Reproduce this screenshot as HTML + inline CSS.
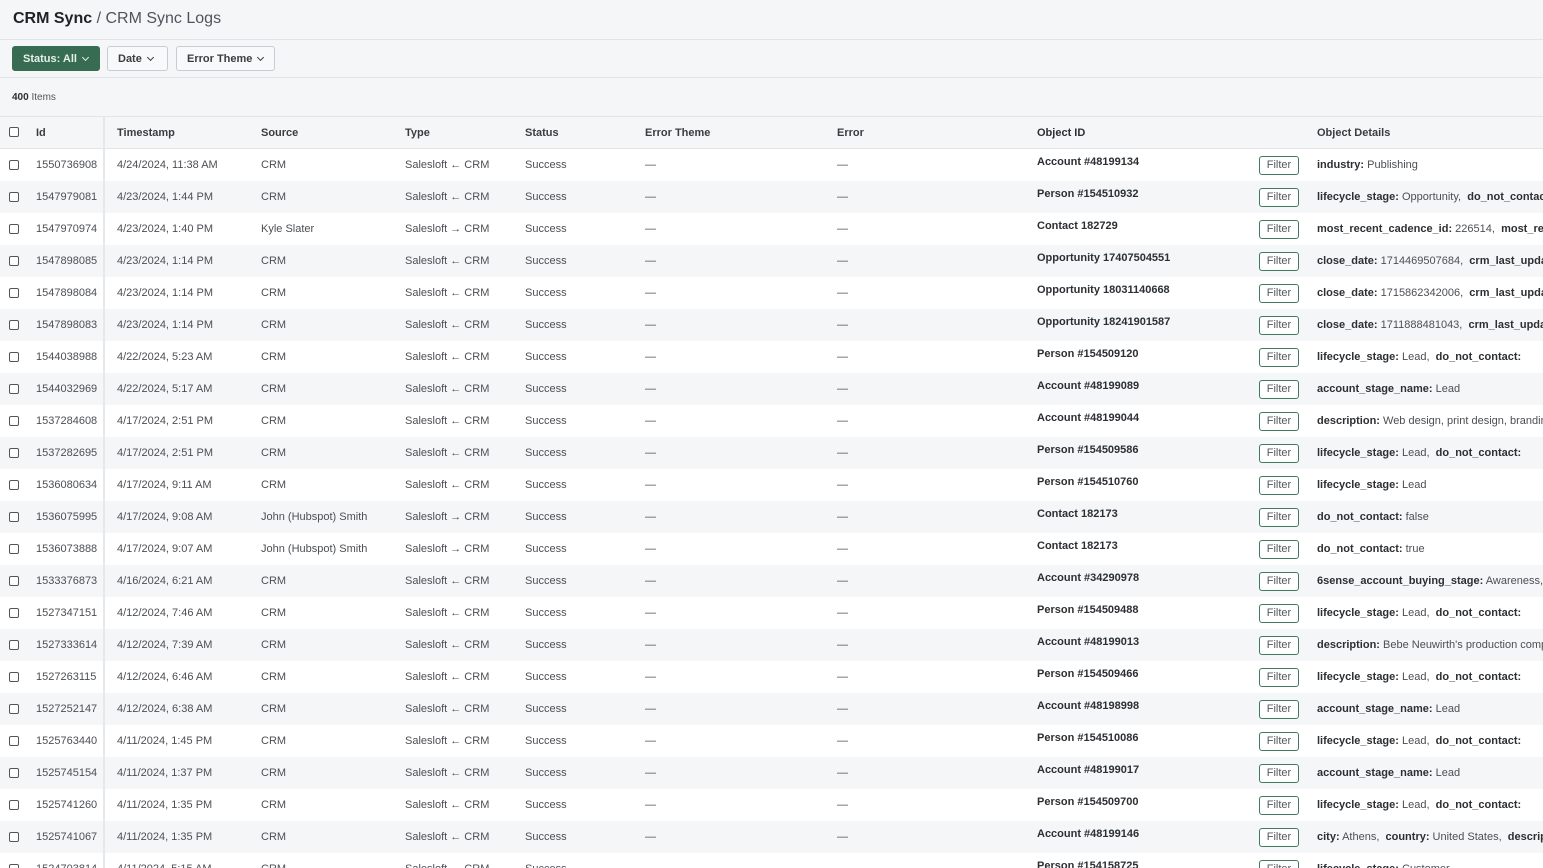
<!DOCTYPE html>
<html><head><meta charset="utf-8">
<style>
*{box-sizing:border-box;margin:0;padding:0}
html,body{width:1543px;height:868px;overflow:hidden;background:#f5f6f7;font-family:"Liberation Sans",sans-serif;color:#3a3d40}
.top{height:40px;border-bottom:1px solid #e2e4e6;padding:10px 13px;font-size:16px;color:#2c2f33}
.top b{font-weight:bold;color:#1f2225}
.top span{color:#50545a}
.bar{height:38px;border-bottom:1px solid #e2e4e6;position:relative}
.btn{position:absolute;top:6px;height:25px;border:1px solid #c9ccd0;border-radius:3px;background:#f8f9fa;font-size:11px;font-weight:bold;color:#3a3d40;padding:6px 10px;white-space:nowrap}
.btn.g{background:#376c52;border-color:#376c52;color:#e8f0ec}
.chev{display:inline-block;width:5px;height:5px;border-right:1px solid currentColor;border-bottom:1px solid currentColor;transform:rotate(45deg);margin-left:6px;position:relative;top:-2px}
.cnt{height:39px;border-bottom:1px solid #e2e4e6;font-size:10px;padding:14px 12px;color:#555}
.cnt b{color:#2c2f33}
.row{position:relative;height:32px;font-size:11px;white-space:nowrap;color:#4b4f54}
.row span{position:absolute;top:10px}
.hd{background:#f5f6f7;border-bottom:1px solid #e2e4e6;font-weight:bold;color:#3a3d40;height:32px}
.hd span{top:10px}
.w{background:#fff}.g2{background:#f5f6f7}
.cb{position:absolute;left:9px;top:11px;width:10px;height:10px;border:1px solid #555;border-radius:2px;background:#fff}
.hd .cb{top:10px}
.div{position:absolute;left:103px;top:0;bottom:0;width:2px;background:#e6e8ea}
.a{left:36px}.b{left:117px}.c{left:261px}.d{left:405px}.e{left:525px}.f{left:645px}.h{left:837px}
.row span.i{left:1037px;top:7px;font-weight:bold;color:#2c2f33}
.hd span.i{top:10px}
.j{left:1317px}
.j b{color:#2c2f33}
.fb{position:absolute;left:1259px;top:7px;width:40px;height:19px;border:1px solid #3f7a5e;border-radius:3px;font-size:11px;color:#55595e;text-align:center;line-height:17px;background:#fff}
</style></head><body>
<div class="top"><b>CRM Sync</b> <span>/ CRM Sync Logs</span></div>
<div class="bar">
<div class="btn g" style="left:12px;width:88px">Status: All<i class="chev"></i></div>
<div class="btn" style="left:107px;width:61px">Date<i class="chev"></i></div>
<div class="btn" style="left:176px;width:99px">Error Theme<i class="chev"></i></div>
</div>
<div class="cnt"><b>400</b> Items</div>
<div class="row hd"><i class="cb"></i><div class="div"></div><span class="a">Id</span><span class="b">Timestamp</span><span class="c">Source</span><span class="d">Type</span><span class="e">Status</span><span class="f">Error Theme</span><span class="h">Error</span><span class="i">Object ID</span><span class="j">Object Details</span></div>

<div class="row w"><i class="cb"></i><div class="div"></div><span class="a">1550736908</span><span class="b">4/24/2024, 11:38 AM</span><span class="c">CRM</span><span class="d">Salesloft ← CRM</span><span class="e">Success</span><span class="f">—</span><span class="h">—</span><span class="i">Account #48199134</span><div class="fb">Filter</div><span class="j"><b>industry:</b> Publishing</span></div>
<div class="row g2"><i class="cb"></i><div class="div"></div><span class="a">1547979081</span><span class="b">4/23/2024, 1:44 PM</span><span class="c">CRM</span><span class="d">Salesloft ← CRM</span><span class="e">Success</span><span class="f">—</span><span class="h">—</span><span class="i">Person #154510932</span><div class="fb">Filter</div><span class="j"><b>lifecycle_stage:</b> Opportunity, &nbsp;<b>do_not_contact:</b></span></div>
<div class="row w"><i class="cb"></i><div class="div"></div><span class="a">1547970974</span><span class="b">4/23/2024, 1:40 PM</span><span class="c">Kyle Slater</span><span class="d">Salesloft → CRM</span><span class="e">Success</span><span class="f">—</span><span class="h">—</span><span class="i">Contact 182729</span><div class="fb">Filter</div><span class="j"><b>most_recent_cadence_id:</b> 226514, &nbsp;<b>most_recent_step</b></span></div>
<div class="row g2"><i class="cb"></i><div class="div"></div><span class="a">1547898085</span><span class="b">4/23/2024, 1:14 PM</span><span class="c">CRM</span><span class="d">Salesloft ← CRM</span><span class="e">Success</span><span class="f">—</span><span class="h">—</span><span class="i">Opportunity 17407504551</span><div class="fb">Filter</div><span class="j"><b>close_date:</b> 1714469507684, &nbsp;<b>crm_last_updated</b></span></div>
<div class="row w"><i class="cb"></i><div class="div"></div><span class="a">1547898084</span><span class="b">4/23/2024, 1:14 PM</span><span class="c">CRM</span><span class="d">Salesloft ← CRM</span><span class="e">Success</span><span class="f">—</span><span class="h">—</span><span class="i">Opportunity 18031140668</span><div class="fb">Filter</div><span class="j"><b>close_date:</b> 1715862342006, &nbsp;<b>crm_last_updated</b></span></div>
<div class="row g2"><i class="cb"></i><div class="div"></div><span class="a">1547898083</span><span class="b">4/23/2024, 1:14 PM</span><span class="c">CRM</span><span class="d">Salesloft ← CRM</span><span class="e">Success</span><span class="f">—</span><span class="h">—</span><span class="i">Opportunity 18241901587</span><div class="fb">Filter</div><span class="j"><b>close_date:</b> 1711888481043, &nbsp;<b>crm_last_updated</b></span></div>
<div class="row w"><i class="cb"></i><div class="div"></div><span class="a">1544038988</span><span class="b">4/22/2024, 5:23 AM</span><span class="c">CRM</span><span class="d">Salesloft ← CRM</span><span class="e">Success</span><span class="f">—</span><span class="h">—</span><span class="i">Person #154509120</span><div class="fb">Filter</div><span class="j"><b>lifecycle_stage:</b> Lead, &nbsp;<b>do_not_contact:</b></span></div>
<div class="row g2"><i class="cb"></i><div class="div"></div><span class="a">1544032969</span><span class="b">4/22/2024, 5:17 AM</span><span class="c">CRM</span><span class="d">Salesloft ← CRM</span><span class="e">Success</span><span class="f">—</span><span class="h">—</span><span class="i">Account #48199089</span><div class="fb">Filter</div><span class="j"><b>account_stage_name:</b> Lead</span></div>
<div class="row w"><i class="cb"></i><div class="div"></div><span class="a">1537284608</span><span class="b">4/17/2024, 2:51 PM</span><span class="c">CRM</span><span class="d">Salesloft ← CRM</span><span class="e">Success</span><span class="f">—</span><span class="h">—</span><span class="i">Account #48199044</span><div class="fb">Filter</div><span class="j"><b>description:</b> Web design, print design, branding</span></div>
<div class="row g2"><i class="cb"></i><div class="div"></div><span class="a">1537282695</span><span class="b">4/17/2024, 2:51 PM</span><span class="c">CRM</span><span class="d">Salesloft ← CRM</span><span class="e">Success</span><span class="f">—</span><span class="h">—</span><span class="i">Person #154509586</span><div class="fb">Filter</div><span class="j"><b>lifecycle_stage:</b> Lead, &nbsp;<b>do_not_contact:</b></span></div>
<div class="row w"><i class="cb"></i><div class="div"></div><span class="a">1536080634</span><span class="b">4/17/2024, 9:11 AM</span><span class="c">CRM</span><span class="d">Salesloft ← CRM</span><span class="e">Success</span><span class="f">—</span><span class="h">—</span><span class="i">Person #154510760</span><div class="fb">Filter</div><span class="j"><b>lifecycle_stage:</b> Lead</span></div>
<div class="row g2"><i class="cb"></i><div class="div"></div><span class="a">1536075995</span><span class="b">4/17/2024, 9:08 AM</span><span class="c">John (Hubspot) Smith</span><span class="d">Salesloft → CRM</span><span class="e">Success</span><span class="f">—</span><span class="h">—</span><span class="i">Contact 182173</span><div class="fb">Filter</div><span class="j"><b>do_not_contact:</b> false</span></div>
<div class="row w"><i class="cb"></i><div class="div"></div><span class="a">1536073888</span><span class="b">4/17/2024, 9:07 AM</span><span class="c">John (Hubspot) Smith</span><span class="d">Salesloft → CRM</span><span class="e">Success</span><span class="f">—</span><span class="h">—</span><span class="i">Contact 182173</span><div class="fb">Filter</div><span class="j"><b>do_not_contact:</b> true</span></div>
<div class="row g2"><i class="cb"></i><div class="div"></div><span class="a">1533376873</span><span class="b">4/16/2024, 6:21 AM</span><span class="c">CRM</span><span class="d">Salesloft ← CRM</span><span class="e">Success</span><span class="f">—</span><span class="h">—</span><span class="i">Account #34290978</span><div class="fb">Filter</div><span class="j"><b>6sense_account_buying_stage:</b> Awareness, &nbsp;<b>6sense</b></span></div>
<div class="row w"><i class="cb"></i><div class="div"></div><span class="a">1527347151</span><span class="b">4/12/2024, 7:46 AM</span><span class="c">CRM</span><span class="d">Salesloft ← CRM</span><span class="e">Success</span><span class="f">—</span><span class="h">—</span><span class="i">Person #154509488</span><div class="fb">Filter</div><span class="j"><b>lifecycle_stage:</b> Lead, &nbsp;<b>do_not_contact:</b></span></div>
<div class="row g2"><i class="cb"></i><div class="div"></div><span class="a">1527333614</span><span class="b">4/12/2024, 7:39 AM</span><span class="c">CRM</span><span class="d">Salesloft ← CRM</span><span class="e">Success</span><span class="f">—</span><span class="h">—</span><span class="i">Account #48199013</span><div class="fb">Filter</div><span class="j"><b>description:</b> Bebe Neuwirth's production company</span></div>
<div class="row w"><i class="cb"></i><div class="div"></div><span class="a">1527263115</span><span class="b">4/12/2024, 6:46 AM</span><span class="c">CRM</span><span class="d">Salesloft ← CRM</span><span class="e">Success</span><span class="f">—</span><span class="h">—</span><span class="i">Person #154509466</span><div class="fb">Filter</div><span class="j"><b>lifecycle_stage:</b> Lead, &nbsp;<b>do_not_contact:</b></span></div>
<div class="row g2"><i class="cb"></i><div class="div"></div><span class="a">1527252147</span><span class="b">4/12/2024, 6:38 AM</span><span class="c">CRM</span><span class="d">Salesloft ← CRM</span><span class="e">Success</span><span class="f">—</span><span class="h">—</span><span class="i">Account #48198998</span><div class="fb">Filter</div><span class="j"><b>account_stage_name:</b> Lead</span></div>
<div class="row w"><i class="cb"></i><div class="div"></div><span class="a">1525763440</span><span class="b">4/11/2024, 1:45 PM</span><span class="c">CRM</span><span class="d">Salesloft ← CRM</span><span class="e">Success</span><span class="f">—</span><span class="h">—</span><span class="i">Person #154510086</span><div class="fb">Filter</div><span class="j"><b>lifecycle_stage:</b> Lead, &nbsp;<b>do_not_contact:</b></span></div>
<div class="row g2"><i class="cb"></i><div class="div"></div><span class="a">1525745154</span><span class="b">4/11/2024, 1:37 PM</span><span class="c">CRM</span><span class="d">Salesloft ← CRM</span><span class="e">Success</span><span class="f">—</span><span class="h">—</span><span class="i">Account #48199017</span><div class="fb">Filter</div><span class="j"><b>account_stage_name:</b> Lead</span></div>
<div class="row w"><i class="cb"></i><div class="div"></div><span class="a">1525741260</span><span class="b">4/11/2024, 1:35 PM</span><span class="c">CRM</span><span class="d">Salesloft ← CRM</span><span class="e">Success</span><span class="f">—</span><span class="h">—</span><span class="i">Person #154509700</span><div class="fb">Filter</div><span class="j"><b>lifecycle_stage:</b> Lead, &nbsp;<b>do_not_contact:</b></span></div>
<div class="row g2"><i class="cb"></i><div class="div"></div><span class="a">1525741067</span><span class="b">4/11/2024, 1:35 PM</span><span class="c">CRM</span><span class="d">Salesloft ← CRM</span><span class="e">Success</span><span class="f">—</span><span class="h">—</span><span class="i">Account #48199146</span><div class="fb">Filter</div><span class="j"><b>city:</b> Athens, &nbsp;<b>country:</b> United States, &nbsp;<b>description</b></span></div>
<div class="row w"><i class="cb"></i><div class="div"></div><span class="a">1524703814</span><span class="b">4/11/2024, 5:15 AM</span><span class="c">CRM</span><span class="d">Salesloft ← CRM</span><span class="e">Success</span><span class="f">—</span><span class="h">—</span><span class="i">Person #154158725</span><div class="fb">Filter</div><span class="j"><b>lifecycle_stage:</b> Customer</span></div>
</body></html>
